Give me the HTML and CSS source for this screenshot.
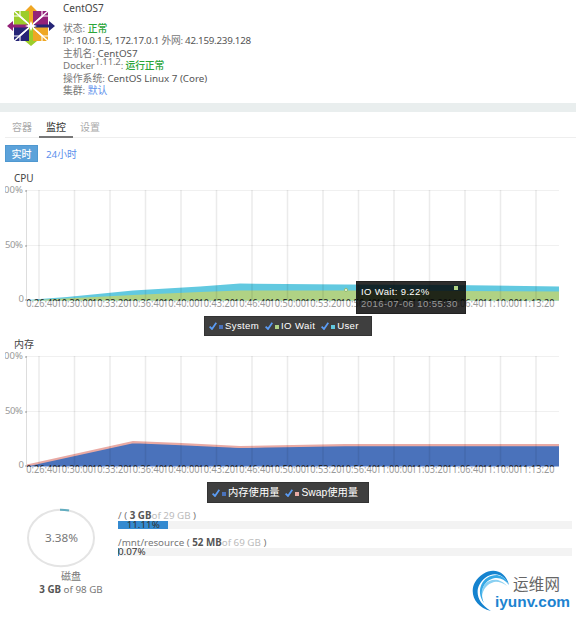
FILE: index.html
```
<!DOCTYPE html>
<html lang="zh-CN">
<head>
  <meta charset="UTF-8" />
  <meta name="viewport" content="width=device-width, initial-scale=1.0" />
  <title>CentOS7</title>
  <link rel="stylesheet" href="styles.css">
</head>
<body>
  <header class="host">
    <svg class="host-logo" width="48" height="42" viewBox="0 0 48 42">
      <rect x="7" y="6" width="16" height="14" fill="#9ccd2a" />
      <rect x="25" y="6" width="16" height="14" fill="#932279" />
      <rect x="7" y="22" width="16" height="14" fill="#262577" />
      <rect x="25" y="22" width="16" height="14" fill="#efa724" />
      <g stroke="#fff" stroke-width="1.1" fill="none">
        <path d="M7 6L41 36M41 6L7 36" stroke-width="1.5" />
        <path d="M13 5v6l11 10l11-10V5M13 37v-6l11-10l11 10v6M6 11h6l12 10L12 31H6M42 11h-6L24 21l12 10h6" />
      </g>
      <path d="M24 0l6 6h-4v14h-4V6h-4z" fill="#efa724" />
      <path d="M24 41l6-5h-4V22h-4v14h-4z" fill="#9ccd2a" />
      <path d="M0 21l6-5v3.500h15v3H6V26z" fill="#932279" />
      <path d="M48 21l-6-5v3.500H27v3h15V26z" fill="#262577" />
      <path d="M24 16l1.500 3.500L30 21l-4.500 1.500L24 26l-1.500-3.500L18 21l4.500-1.500z" fill="#fff" />
    </svg>
    <div class="host-info">
      <h1>CentOS7</h1>
      <p>状态: <span class="ok">正常</span></p>
      <p class="ip">IP: <b>10.0.1.5, 172.17.0.1</b> 外网: <b>42.159.239.128</b></p>
      <p>主机名: <b>CentOS7</b></p>
      <p class="docker">Docker<sup>1.11.2</sup>: <span class="ok">运行正常</span></p>
      <p>操作系统: <b>CentOS Linux 7 (Core)</b></p>
      <p>集群: <a>默认</a></p>
    </div>
  </header>

  <nav class="tabs">
    <span>容器</span>
    <span class="active">监控</span>
    <span>设置</span>
  </nav>

  <div class="range">
    <button>实时</button>
    <a>24小时</a>
  </div>

  <section class="chart">
    <h2>CPU</h2>
    <svg class="plot" id="cpu" width="576" height="128">
      <path d="M27 116L67 113L133 106.500L200 102.500L240 99.500L345 100.500L450 101L559 102.500V116.500H27z" fill="#62c9e0" />
      <path d="M27 116.500L133 111L200 108L240 106.500L345 106.500L559 107.500V116.500H27z" fill="#b0d284" />
    </svg>
    <div class="marker"></div>
    <div class="tooltip">
      <div>IO Wait: 9.22% <i></i></div>
      <time>2016-07-06 10:55:30</time>
    </div>
    <div class="legend legend-cpu">
      <span><svg class="tick" viewBox="0 0 8 8"><path d="M.6 4.600L3 7L7.300.8" /></svg><i class="blue"></i>System</span>
      <span><svg class="tick" viewBox="0 0 8 8"><path d="M.6 4.600L3 7L7.300.8" /></svg><i class="green"></i>IO Wait</span>
      <span><svg class="tick" viewBox="0 0 8 8"><path d="M.6 4.600L3 7L7.300.8" /></svg><i class="cyan"></i>User</span>
    </div>
  </section>

  <section class="chart">
    <h2>内存</h2>
    <svg class="plot" id="memory" width="576" height="128">
      <path d="M27 115.500L133 92.500Q186 94.500 240 97.500Q290 96.500 345 95.500H559V116.500H27z" fill="#4a72bb" />
      <path d="M27 115.500L133 92.200Q186 94.200 240 97Q290 96 345 95.200H559" fill="none" stroke="#e9aaa4" stroke-width="2.200" />
    </svg>
    <div class="legend legend-memory">
      <span><svg class="tick" viewBox="0 0 8 8"><path d="M.6 4.600L3 7L7.300.8" /></svg><i class="blue"></i>内存使用量</span>
      <span><svg class="tick" viewBox="0 0 8 8"><path d="M.6 4.600L3 7L7.300.8" /></svg><i class="pink"></i>Swap使用量</span>
    </div>
  </section>

  <section class="storage">
    <div class="disk">
      <svg width="70" height="60" viewBox="0 0 70 60">
        <ellipse cx="35" cy="30" rx="33" ry="28.300" fill="none" stroke="#e4e4e4" stroke-width="2" />
        <path d="M34 1.700Q39 1.700 43 2.600" fill="none" stroke="#62adc0" stroke-width="2" />
        <text x="35.500" y="34" text-anchor="middle" textLength="33" lengthAdjust="spacingAndGlyphs">3.38%</text>
      </svg>
      <div class="disk-name">磁盘</div>
      <div class="disk-size"><b>3 GB</b> of 98 GB</div>
    </div>
    <div class="mounts">
      <div class="mount">
        <div class="mount-name">/ ( <b>3 GB</b><span>of 29 GB</span> )</div>
        <div class="bar"><div class="fill" style="width: 11.11%">11.11%</div></div>
      </div>
      <div class="mount">
        <div class="mount-name">/mnt/resource ( <b>52 MB</b><span>of 69 GB</span> )</div>
        <div class="bar"><div class="fill" style="width: 0.07%">0.07%</div></div>
      </div>
    </div>
  </section>

  <div class="watermark">
    <svg width="112" height="48" viewBox="0 0 112 48">
      <path d="M19 44C-1 39 -6 18 11 7C22 0 34 5 37 18C32 7 22 4 13 11C1 21 4 35 19 44z" fill="#1583cf" />
      <path d="M12 36C3 24 10 8 25 8Q33 9 37 18Q31 10 23 11C12 13 7 24 12 36z" fill="#36a9e6" />
      <path d="M10 29C8 18 17 11 26 13Q32 15 35 19Q28 14 22 15C15 17 11 22 10 29z" fill="#8ad0f2" />
      <text class="mark-cn" x="41" y="23" textLength="47">运维网</text>
      <text class="mark-en" x="23" y="40" textLength="75" lengthAdjust="spacingAndGlyphs">iyunv.com</text>
    </svg>
  </div>

  <script>
    const times = ["10:26:40", "10:30:00", "10:33:20", "10:36:40", "10:40:00", "10:43:20", "10:46:40", "10:50:00",
      "10:53:20", "10:56:40", "11:00:00", "11:03:20", "11:06:40", "11:10:00", "11:13:20"];

    function drawAxes(id) {
      const svg = document.getElementById(id);
      let labels = "";
      let lines = '<path class="axis" d="M26.500 6V116" /><path class="grid-y" d="M26 6.500H559M26 61.500H559" />';
      times.forEach((time, i) => {
        const x = 39 + i * 35.5;
        lines += `<path class="grid-x" d="M${x} 6V116" />`;
        labels += `<text fill="url(#${id}-ink)" x="${x - 18}" y="122.500" textLength="36.500" lengthAdjust="spacingAndGlyphs">${time}</text>`;
      });
      // time labels are dark over the area and grey below the baseline
      svg.insertAdjacentHTML("beforeend", `
        <linearGradient id="${id}-ink" gradientUnits="userSpaceOnUse" x1="0" y1="116" x2="0" y2="118">
          <stop offset="0.5" stop-color="#222" />
          <stop offset="0.5" stop-color="#999" />
        </linearGradient>
        <clipPath id="${id}-x"><rect x="26" y="106" width="540" height="22" /></clipPath>
        <clipPath id="${id}-y"><rect x="5" y="0" width="22" height="128" /></clipPath>
        ${lines}
        <g class="labels-x" clip-path="url(#${id}-x)">${labels}</g>
        <g class="labels-y" clip-path="url(#${id}-y)">
          <text x="-1.500" y="8.500" textLength="24.500">100%</text>
          <text x="5" y="63.500" textLength="18">50%</text>
          <text x="18.500" y="118">0</text>
        </g>
        <path class="dots" d="M25 7h2M25 62h2M25 116h2" />`);
    }

    drawAxes("cpu");
    drawAxes("memory");
  </script>
</body>
</html>
```
FILE: styles.css
```
* {
  box-sizing: border-box;
}

body {
  margin: 0;
  height: 618px;
  overflow: hidden;
  position: relative;
  background: #fff;
  color: #777;
  font-family: "Noto Sans", "Noto Sans CJK SC", sans-serif;
  font-size: 9.8px;
}

h1, h2, p {
  margin: 0;
  font-weight: normal;
}

a {
  color: #5c8fec;
}

.host {
  display: flex;
  height: 112px;
  border-bottom: 9px solid #e9eeee;
}

.host-logo {
  margin: 5px 8px 0 7px;
}

.host-info {
  white-space: nowrap;
}

.host-info h1 {
  height: 22.5px;
  font-size: 10px;
  line-height: 17px;
  color: #444;
}

.host-info p {
  height: 12.5px;
  line-height: 12.5px;
}

.host-info b {
  font-weight: normal;
  color: #555;
}

.host-info .ip {
  letter-spacing: -0.27px;
}

.host-info .docker {
  letter-spacing: -0.15px;
}

.host-info sup {
  font-size: 9.5px;
  line-height: 0;
  vertical-align: 4px;
}

.ok {
  color: #2ba53a;
  font-weight: 500;
}

.tabs {
  display: flex;
  height: 26px;
  margin-left: 5px;
  border-bottom: 1px solid #eee;
  font-size: 10px;
  color: #aaa;
}

.tabs span {
  width: 34px;
  height: 26px;
  line-height: 30px;
  text-align: center;
}

.tabs .active {
  color: #444;
  font-weight: 500;
  border-bottom: 2px solid #777;
}

.range {
  display: flex;
  align-items: center;
  gap: 8px;
  height: 17px;
  margin: 7px 0 0 5px;
}

.range button {
  width: 33px;
  height: 17px;
  padding: 0;
  border: 1px solid #4f98d0;
  background: #5ca2da;
  color: #fff;
  font: 500 10px/14px "Noto Sans", "Noto Sans CJK SC", sans-serif;
}

.chart {
  position: relative;
  height: 166px;
  padding-top: 8px;
}

.chart h2 {
  height: 14px;
  padding-left: 14px;
  font-size: 10px;
  line-height: 16px;
  color: #444;
}

.plot {
  display: block;
}

.grid-x {
  stroke: #000;
  stroke-opacity: 0.08;
  stroke-width: 1.5;
}

.grid-y {
  stroke: #000;
  stroke-opacity: 0.06;
}

.axis {
  stroke: #ddd;
}

.dots {
  stroke: #999;
}

.labels-x {
  font-size: 11px;
}

.labels-y {
  font-size: 9.5px;
  fill: #999;
}

.marker {
  position: absolute;
  left: 344px;
  top: 126px;
  width: 4px;
  height: 4px;
  border: 1px solid #8fbb68;
  border-radius: 50%;
  background: #fff;
}

.tooltip {
  position: absolute;
  left: 356px;
  top: 119px;
  z-index: 2;
  width: 110px;
  height: 33px;
  padding: 4px 4px;
  border: 1px solid #222;
  background: rgba(0, 0, 0, 0.82);
  color: #fff;
  font: 9.5px/12px "Liberation Sans", sans-serif;
  letter-spacing: 0.35px;
  white-space: nowrap;
}

.tooltip div {
  display: flex;
  justify-content: space-between;
  padding-right: 3px;
}

.tooltip i {
  width: 4px;
  height: 4px;
  background: #b0d284;
}

.tooltip time {
  display: block;
  letter-spacing: 0.45px;
  color: #999;
}

.legend {
  position: absolute;
  top: 154px;
  display: flex;
  align-items: center;
  height: 20px;
  padding-left: 4px;
  gap: 6px;
  background: #3f3f3f;
  border: 1px solid #333;
  color: #fff;
  font: 9.6px/18px "Liberation Sans", "Noto Sans CJK SC", sans-serif;
  white-space: nowrap;
}

.legend span {
  display: flex;
  align-items: center;
}

.legend-cpu {
  left: 204px;
  width: 168px;
  letter-spacing: 0.35px;
}

.legend-memory {
  left: 207px;
  width: 162px;
  height: 21px;
  font-size: 10.3px;
}

.tick {
  width: 8px;
  height: 8px;
  margin-right: 2px;
  fill: none;
  stroke: #5b9cf5;
  stroke-width: 1.8;
}

.legend i {
  width: 4px;
  height: 4px;
  margin: 2px 2px 0 0;
}

.blue {
  background: #4a72bb;
}

.green {
  background: #b0d284;
}

.cyan {
  background: #62c9e0;
}

.pink {
  background: #e9aaa4;
}

.storage {
  display: flex;
  padding-top: 14px;
}

.disk {
  width: 118px;
  padding-left: 25.5px;
}

.disk svg {
  display: block;
}

.disk text {
  font-size: 11.5px;
  fill: #777;
}

.disk-name,
.disk-size {
  width: 91px;
  text-align: center;
  line-height: 13px;
}

.disk-name {
  margin-top: 2px;
  font-size: 10px;
}

.disk b,
.mount b {
  color: #555;
}

.mount {
  height: 27px;
}

.mount-name {
  height: 13px;
  line-height: 15px;
  white-space: nowrap;
}

.mount-name span {
  color: #bbb;
}

.bar {
  width: 454px;
  height: 8px;
  background: #f3f3f3;
}

.fill {
  height: 8px;
  background: #348ad0;
  color: #333;
  line-height: 8px;
  text-align: center;
}

.watermark {
  position: absolute;
  left: 472px;
  top: 567px;
}

.mark-cn {
  font-family: "Noto Sans CJK SC", sans-serif;
  font-size: 15.5px;
  fill: #666;
}

.mark-en {
  font-family: "Liberation Sans", sans-serif;
  font-size: 15.5px;
  font-weight: bold;
  fill: #1d83d0;
}
```
